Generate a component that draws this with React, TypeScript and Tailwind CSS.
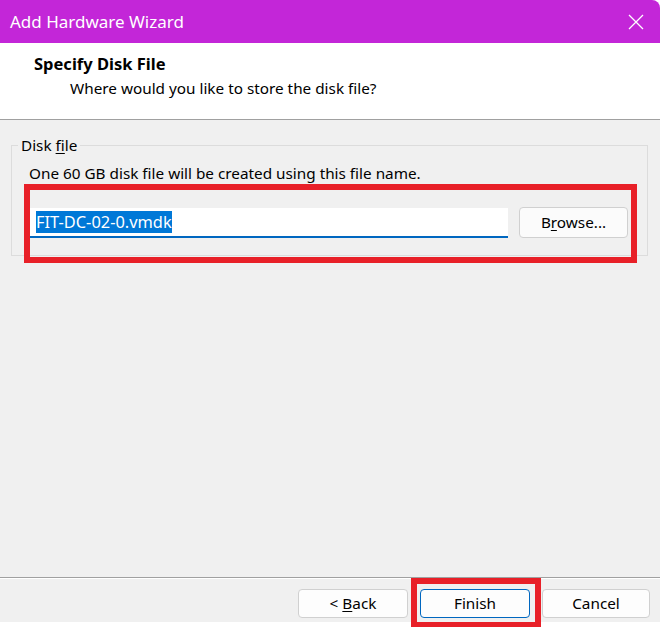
const ui = "font-['Segoe_UI','Noto_Sans',sans-serif]";

function CloseIcon() {
  return (
    <svg width="16" height="16" viewBox="0 0 16 16" aria-hidden="true">
      <path d="M1 1L15 15M15 1L1 15" stroke="#ffffff" strokeWidth="1.3" fill="none" />
    </svg>
  );
}

function WizardButton({
  label,
  accel,
  primary = false,
  width = "w-[110px]",
}: {
  label: string;
  accel?: { before: string; key: string; after: string };
  primary?: boolean;
  width?: string;
}) {
  return (
    <button
      className={`${width} h-[29px] rounded-[4px] border text-[15.3px] leading-none text-black ${
        primary ? "border-[#0067c0] bg-[#fdfdfd]" : "border-[#d0d0d0] bg-[#fdfdfd]"
      }`}
    >
      {accel ? (
        <>
          {accel.before}
          <span className="underline underline-offset-2">{accel.key}</span>
          {accel.after}
        </>
      ) : (
        label
      )}
    </button>
  );
}

export default function App() {
  return (
    <div className={`${ui} flex h-[627px] w-[660px] flex-col overflow-hidden bg-white`}>
      <div className="flex h-[43px] shrink-0 items-center justify-between rounded-tr-[8px] bg-[#c326d8] pl-[10px] pr-[16px]">
        <span className="text-[17px] text-white">Add Hardware Wizard</span>
        <CloseIcon />
      </div>

      <div className="h-[77px] shrink-0 border-b border-[#a0a0a0] bg-white pt-[11px]">
        <div className="pl-[34px] text-[16.5px] font-bold leading-[20px] text-black">Specify Disk File</div>
        <div className="mt-[4px] pl-[70px] text-[15.3px] leading-[20px] text-black">
          Where would you like to store the disk file?
        </div>
      </div>

      <div className="flex-1 bg-[#f0f0f0] px-[11px] pt-[25px]">
        <div className="flex h-[111px] w-[637px] flex-col border border-[#dcdcdc]">
          <span className="-mt-[11px] ml-[6px] w-fit shrink-0 bg-[#f0f0f0] px-[3px] text-[15.3px] leading-[20px] text-black">
            Disk <span className="underline underline-offset-2">f</span>ile
          </span>
          <div className="ml-[17px] mt-[8px] shrink-0 text-[15.3px] leading-[20px] text-black">
            One 60 GB disk file will be created using this file name.
          </div>
          <div className="ml-[12px] mt-[1px] flex h-[79px] w-[613px] shrink-0 items-start border-[6px] border-[#e82028] pt-[18px] pr-[3px]">
            <div className="flex h-[30px] w-[478px] items-center border-b-2 border-[#0067c0] bg-white pl-[6px]">
              <span className="bg-[#0078d7] text-[16.4px] leading-[22px] text-white">FIT-DC-02-0.vmdk</span>
            </div>
            <button className="ml-auto -mt-[1px] h-[31px] w-[109px] rounded-[4px] border border-[#d0d0d0] bg-[#fbfbfb] text-[15.3px] text-black">
              B<span className="underline underline-offset-2">r</span>owse...
            </button>
          </div>
        </div>
      </div>

      <div className="shrink-0 border-t border-[#a0a0a0] bg-[#f0f0f0]">
        <div className="flex h-[44px] items-start justify-end gap-[12px] border-t border-white pr-[10px] pt-[10px]">
          <WizardButton label="< Back" accel={{ before: "< ", key: "B", after: "ack" }} />
          <span className="relative flex">
            <WizardButton label="Finish" primary />
            <span className="pointer-events-none absolute -bottom-[10px] -left-[9px] -right-[11px] -top-[11px] border-[6px] border-[#e82028]" />
          </span>
          <WizardButton label="Cancel" width="w-[108px]" />
        </div>
        <div className="h-[5px] bg-white" />
      </div>
    </div>
  );
}
